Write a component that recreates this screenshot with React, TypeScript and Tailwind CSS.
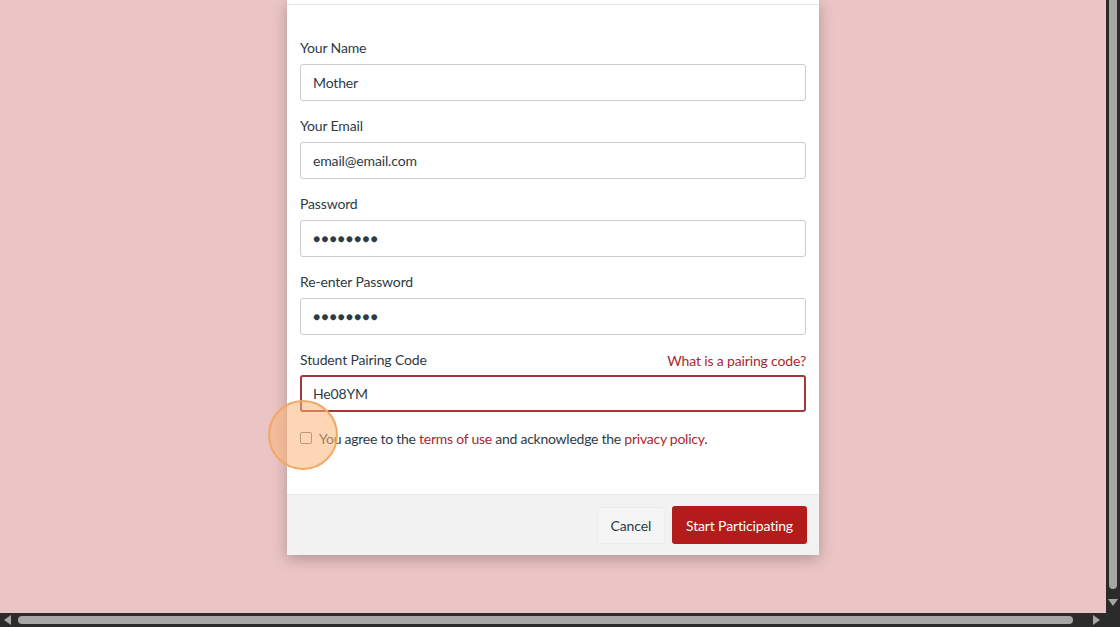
import React from 'react';

const Field: React.FC<{ label: string; value: string; dots?: boolean }> = ({ label, value, dots }) => (
  <div className="mb-[14px]">
    <div className="text-[14px] leading-[22px] text-[#2d3b45] mb-[5px]">{label}</div>
    <div className="h-[37px] rounded-[3px] border border-[#c7cdd1] bg-white px-[12px] flex items-center text-[14px] text-[#2d3b45]">
      {dots ? <span className="text-[12px] tracking-[1px]">●●●●●●●●</span> : value}
    </div>
  </div>
);

export default function App() {
  return (
    <div className="w-[1120px] h-[627px] flex flex-col overflow-hidden font-['Lato','Liberation_Sans',sans-serif] tracking-[-0.15px]">
      <div className="flex flex-1 min-h-0">
        {/* page */}
        <div className="relative flex-1 bg-[#ebc5c6] overflow-hidden">
          <div className="ml-[287px] w-[532px] bg-white shadow-[0_4px_14px_rgba(0,0,0,0.25)]">
            <div className="h-[5px] border-b border-[#e6e6e6]" />
            <div className="px-[13px] pt-[32px] pb-[45px]">
              <Field label="Your Name" value="Mother" />
              <Field label="Your Email" value="email@email.com" />
              <Field label="Password" value="" dots />
              <Field label="Re-enter Password" value="" dots />
              <div className="mb-[15px]">
                <div className="flex justify-between items-center h-[22px] mb-[4px]">
                  <span className="text-[14px] leading-[22px] text-[#2d3b45]">Student Pairing Code</span>
                  <span className="text-[14px] leading-[22px] text-[#a8282c] translate-y-[1px]">What is a pairing code?</span>
                </div>
                <div className="h-[37px] rounded-[3px] border-2 border-[#a4383b] bg-white px-[11px] flex items-center text-[14px] text-[#2d3b45]">
                  He08YM
                </div>
              </div>
              <div className="flex items-center h-[22px] text-[14px] text-[#2d3b45]">
                <span className="w-[12px] h-[12px] rounded-[2px] border border-[#6b7780] bg-white mr-[7px]" />
                <span className="tracking-[-0.25px]">
                  You agree to the <span className="text-[#a8282c]">terms of use</span> and acknowledge the{' '}
                  <span className="text-[#a8282c]">privacy policy</span>.
                </span>
              </div>
            </div>
            <div className="h-[61px] bg-[#f2f2f2] border-t border-[#e8e8e8] flex items-center justify-end gap-[7px] pr-[12px]">
              <button className="h-[37px] px-[13px] rounded-[3px] bg-[#f5f5f5] border border-[#ececec] text-[14px] text-[#2d3b45]">
                Cancel
              </button>
              <button className="h-[38px] px-[14px] rounded-[3px] bg-[#b41c1b] text-[14px] text-white">
                Start Participating
              </button>
            </div>
          </div>
          {/* click highlight */}
          <div className="absolute left-[268px] top-[400px] w-[70px] h-[70px] rounded-full bg-[rgba(250,180,120,0.55)] border-2 border-[#f2a865]" />
        </div>
        {/* vertical scrollbar */}
        <div className="w-[14px] bg-[#2b2b2b] flex flex-col items-center">
          <div className="w-[8px] flex-1 mb-[10px] rounded-b-full bg-[#a6a6a6]" />
          <svg width="10" height="8" viewBox="0 0 10 8" className="mb-[6px]">
            <path d="M0 0h10L5 7z" fill="#a6a6a6" />
          </svg>
        </div>
      </div>
      {/* horizontal scrollbar */}
      <div className="h-[14px] bg-[#2b2b2b] flex items-center">
        <svg width="8" height="10" viewBox="0 0 8 10" className="ml-[3px]">
          <path d="M8 0v10L1 5z" fill="#a6a6a6" />
        </svg>
        <div className="ml-[7px] w-[1055px] h-[8px] rounded-full bg-[#a6a6a6]" />
        <svg width="8" height="10" viewBox="0 0 8 10" className="ml-[20px]">
          <path d="M0 0v10l7-5z" fill="#a6a6a6" />
        </svg>
      </div>
    </div>
  );
}
